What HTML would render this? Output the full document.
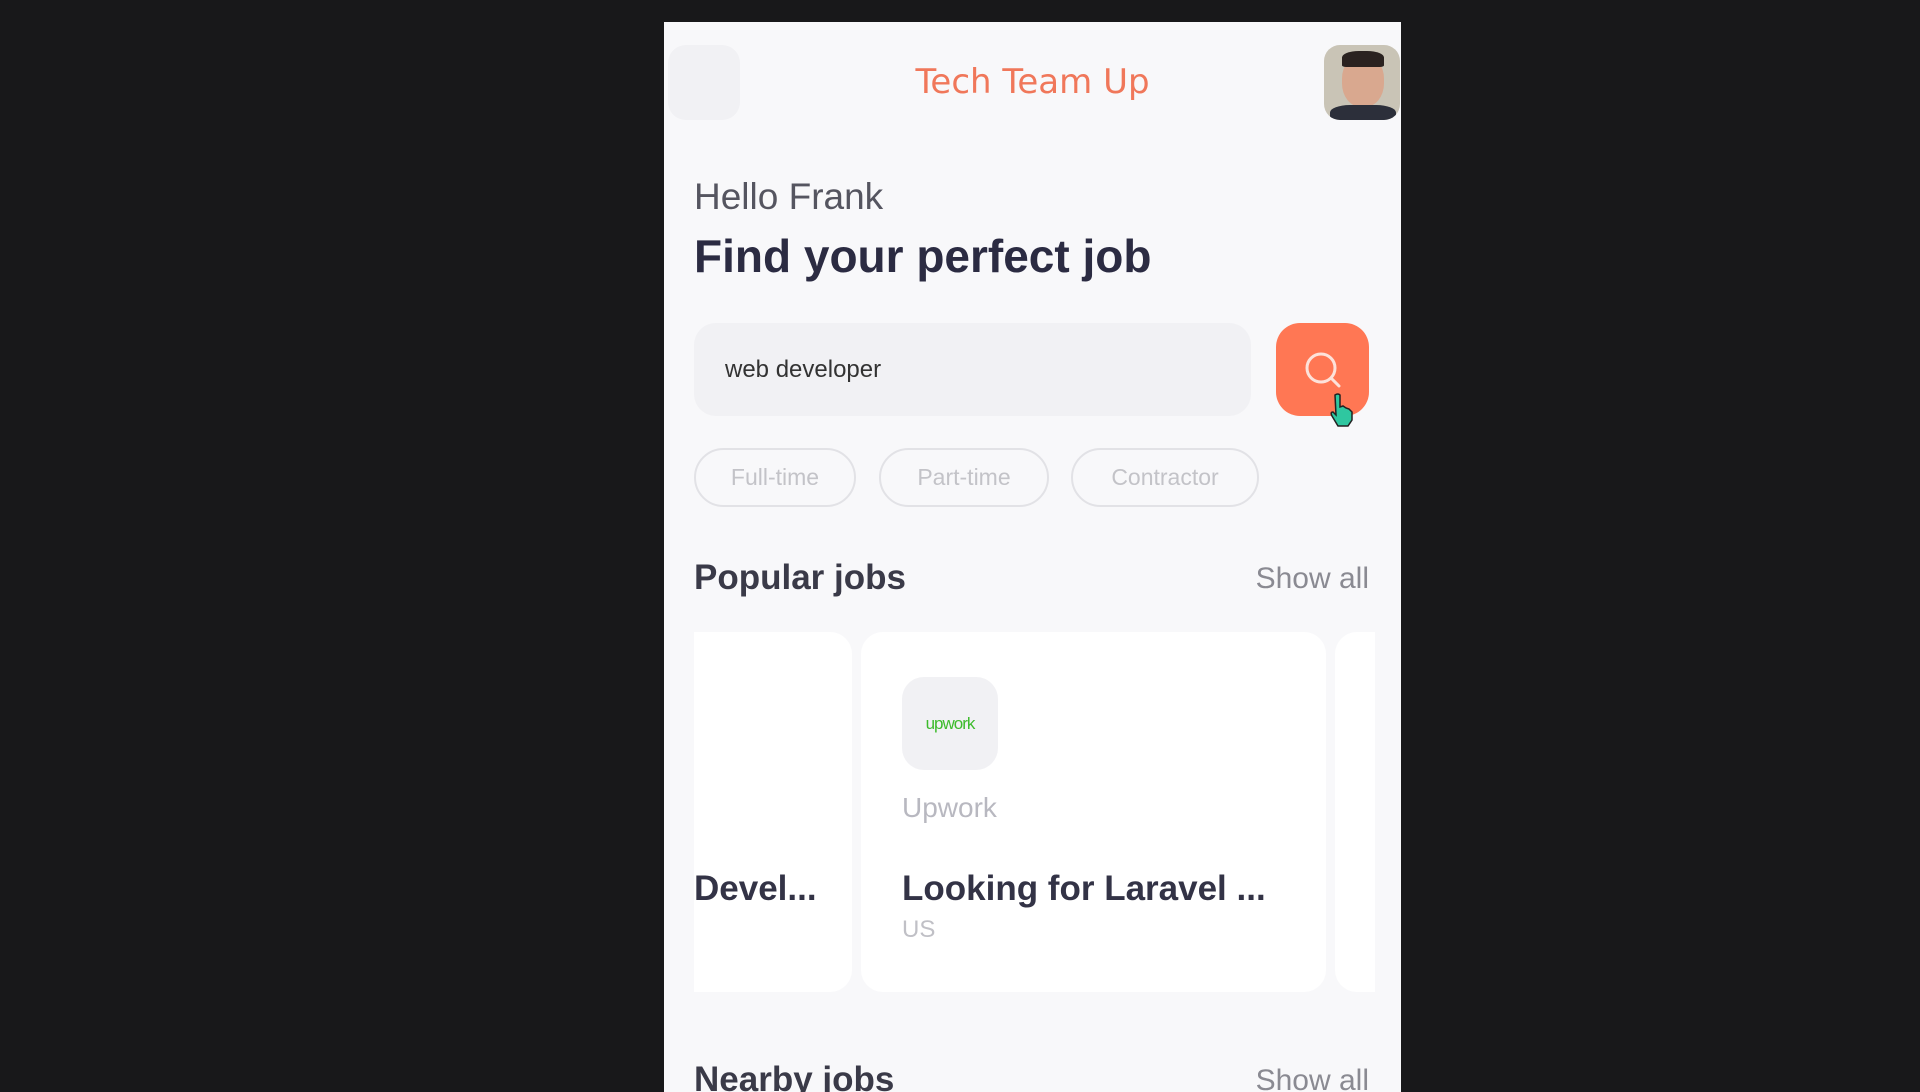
<!DOCTYPE html>
<html><head><meta charset="utf-8"><style>
*{margin:0;padding:0;box-sizing:border-box}
body{width:1920px;height:1080px;background:#18181a;overflow:hidden;position:relative;font-family:"Liberation Sans",sans-serif}
.p{position:absolute;left:664px;top:22px;width:737px;height:1070px;background:#f8f8fa;overflow:hidden}
.a{position:absolute}
.chip{position:absolute;top:426px;height:59px;border:2px solid #e2e2e6;border-radius:30px;color:#c3c3c8;font-size:23px;display:flex;align-items:center;justify-content:center}
</style></head><body>
<div class="p">
 <div class="a" style="left:4px;top:23px;width:72px;height:75px;background:#f1f1f4;border-radius:18px"></div>
 <div class="a" style="left:0;width:737px;top:40px;text-align:center;font-family:'DejaVu Sans',sans-serif;font-size:34px;color:#f0775a">Tech Team Up</div>
 <div class="a" style="left:660px;top:23px;width:76px;height:75px;border-radius:16px;overflow:hidden;background:#c9c4b6">
  <div class="a" style="left:18px;top:10px;width:42px;height:52px;border-radius:45%;background:#d9a88f"></div>
  <div class="a" style="left:18px;top:6px;width:42px;height:16px;border-radius:40% 40% 10% 10%;background:#2a2220"></div>
  <div class="a" style="left:6px;top:60px;width:66px;height:25px;border-radius:30% 30% 0 0;background:#2c2f3a"></div>
 </div>
 <div class="a" style="left:30px;top:154px;font-size:37px;color:#555560">Hello Frank</div>
 <div class="a" style="left:30px;top:207px;font-size:46px;font-weight:bold;color:#2b2b42">Find your perfect job</div>
 <div class="a" style="left:30px;top:301px;width:557px;height:93px;background:#f1f1f4;border-radius:22px"></div>
 <div class="a" style="left:61px;top:334px;font-size:24px;color:#333">web developer</div>
 <div class="a" style="left:612px;top:301px;width:93px;height:93px;background:#ff7754;border-radius:24px">
  <svg width="93" height="93" viewBox="0 0 93 93"><circle cx="45" cy="45" r="14" fill="none" stroke="#fde2da" stroke-width="3"/><line x1="55" y1="55" x2="63" y2="63" stroke="#fde2da" stroke-width="3" stroke-linecap="round"/></svg>
 </div>
 <svg class="a" style="left:663px;top:370px" width="30" height="36" viewBox="0 0 30 36"><path d="M8 3 q3-2 5 0 v12 l3-1 3 2 3 1 3 3 v8 l-4 6 h-10 l-6-10 q-2-4 1-4 l3 3 z" fill="#2fc7a0" stroke="#222" stroke-width="1.5"/></svg>
 <div class="chip" style="left:30px;width:162px">Full-time</div>
 <div class="chip" style="left:215px;width:170px">Part-time</div>
 <div class="chip" style="left:407px;width:188px">Contractor</div>
 <div class="a" style="left:30px;top:536px;font-size:35px;font-weight:bold;color:#3a3a48">Popular jobs</div>
 <div class="a" style="right:32px;top:540px;font-size:30px;color:#8a8a92">Show all</div>
 <div class="a" style="left:30px;top:610px;width:158px;height:360px;background:#fff;border-radius:0 22px 22px 0"></div>
 <div class="a" style="left:197px;top:610px;width:465px;height:360px;background:#fff;border-radius:22px"></div>
 <div class="a" style="left:671px;top:610px;width:40px;height:360px;background:#fff;border-radius:22px 0 0 22px"></div>
 <div class="a" style="left:238px;top:655px;width:96px;height:93px;background:#f1f1f4;border-radius:22px;display:flex;align-items:center;justify-content:center;color:#3dbb2c;font-size:17px;letter-spacing:-1px">upwork</div>
 <div class="a" style="left:238px;top:770px;font-size:28px;color:#b8b8c0">Upwork</div>
 <div class="a" style="left:30px;top:847px;font-size:35px;font-weight:bold;color:#333346">Devel...</div>
 <div class="a" style="left:238px;top:847px;font-size:35px;font-weight:bold;color:#333346">Looking for Laravel ...</div>
 <div class="a" style="left:238px;top:894px;font-size:24px;color:#c0c0c6">US</div>
 <div class="a" style="left:30px;top:1038px;font-size:35px;font-weight:bold;color:#3a3a48">Nearby jobs</div>
 <div class="a" style="right:32px;top:1042px;font-size:30px;color:#8a8a92">Show all</div>
</div>
</body></html>
